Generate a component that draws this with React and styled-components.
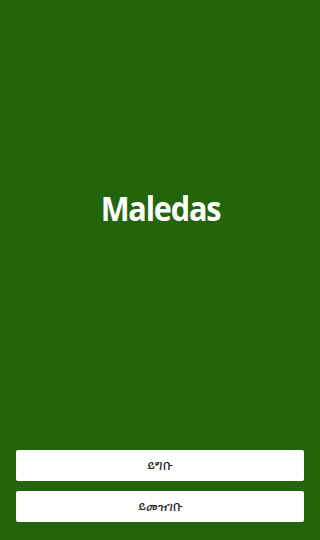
import React from 'react';
import styled, {createGlobalStyle} from 'styled-components';

const GlobalStyle = createGlobalStyle`
    html, body {
        margin: 0;
        padding: 0;
        background: #23650b;
    }
`;

const Screen = styled.div`
    height: 540px;
    display: flex;
    flex-direction: column;
    background: #23650b;
    box-sizing: border-box;
    padding: 0 16px 18px;
`;

const Hero = styled.div`
    flex: 1;
    display: flex;
    align-items: center;
    justify-content: center;
    padding-bottom: 34px;
`;

const Title = styled.h1`
    margin: 0;
    color: #ffffff;
    font-family: "Open Sans", "DejaVu Sans", sans-serif;
    font-weight: 700;
    font-size: 34px;
    letter-spacing: -1.3px;
    transform: scaleX(0.9);
`;

const Actions = styled.div`
    display: flex;
    flex-direction: column;
    gap: 10px;
`;

const Button = styled.button`
    height: 31px;
    border: none;
    border-radius: 2px;
    background: #ffffff;
    color: #222;
    font-family: "DejaVu Sans", "Noto Sans", sans-serif;
    font-size: 13px;
    cursor: pointer;
`;

export default function App(){
    return (
        <>
            <GlobalStyle />
            <Screen>
                <Hero>
                    <Title>Maledas</Title>
                </Hero>
                <Actions>
                    <Button>ይግቡ</Button>
                    <Button>ይመዝገቡ</Button>
                </Actions>
            </Screen>
        </>
    );
}
